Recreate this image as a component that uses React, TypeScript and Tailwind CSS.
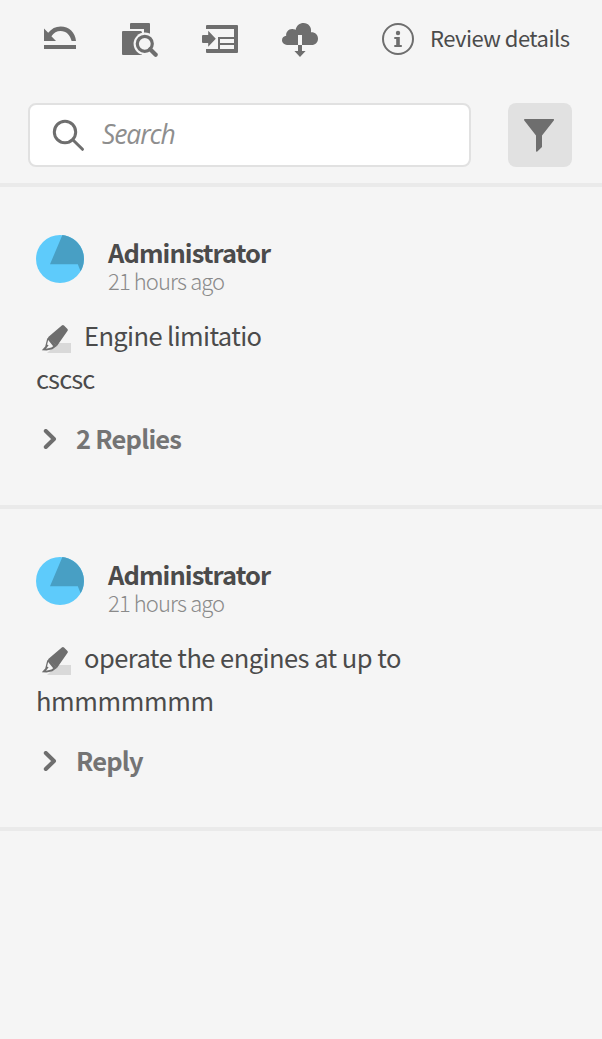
import React from "react";

const ICON = "#6e6e6e";

function UndoIcon() {
  return (
    <svg width="40" height="40" viewBox="40 19 40 40" fill={ICON} aria-hidden="true">
      <path d="M44 28.6L48.2 32.8C51.4 28.6 55.6 26.4 60.6 26.4C69 26.4 75.4 32.4 76 41H71.6C70.2 34.8 66.2 30.9 60.6 30.9C56.8 30.9 53.8 32.4 51.4 36.3L56 41H44Z" />
      <path d="M44 45h32v4H44z" />
    </svg>
  );
}

function FindFileIcon() {
  return (
    <svg width="40" height="40" viewBox="120 19 40 40" fill={ICON} aria-hidden="true">
      <path d="M131 23h18a1 1 0 0 1 1 1v12h-6v-7h-14v-5a1 1 0 0 1 1-1z" />
      <path d="M123 31h17.5a1.5 1.5 0 0 1 1.5 1.5V55h-19a1 1 0 0 1-1-1V32a1 1 0 0 1 1-1z" />
      <circle cx="144.8" cy="43.8" r="11.2" fill="#f5f5f5" />
      <circle cx="144.8" cy="43.8" r="7.5" fill="#f5f5f5" stroke={ICON} strokeWidth="3.2" />
      <path d="M150.2 49.2L155.7 54.7" stroke={ICON} strokeWidth="4.2" strokeLinecap="round" />
    </svg>
  );
}

function ImportIcon() {
  return (
    <svg width="40" height="40" viewBox="200 19 40 40" fill={ICON} aria-hidden="true">
      <path d="M207 25h30a1 1 0 0 1 1 1v26a1 1 0 0 1-1 1h-30a1 1 0 0 1-1-1v-3h12V37h16v-8h-28v-3a1 1 0 0 1 1-1zM220 39v4h14v-4zM220 45v4h14v-4z" fillRule="evenodd" />
      <path d="M203 35h5.2v-4.2l7.6 8-7.6 8V43H203a1 1 0 0 1-1-1v-6a1 1 0 0 1 1-1z" />
    </svg>
  );
}

function CloudIcon() {
  return (
    <svg width="40" height="40" viewBox="280 19 40 40" fill={ICON} aria-hidden="true">
      <path d="M302 45V35h-4v10H288.5C284.8 45 282 43 282 40.2C282 37.5 284.1 36 286.2 35.8C285.7 32.4 288.4 28.8 292.5 29.1C294 29.2 294.6 29.6 295.5 30C296.5 25.6 299.6 23 303.6 23C308.4 23 311.8 27 311 32.2C315 32 318 34.6 318 38.5C318 42.4 315.3 45 311.6 45Z" />
      <path d="M298 45h4v6h3.6l-5.6 6-5.6-6h3.6z" />
    </svg>
  );
}

function InfoIcon() {
  return (
    <svg width="40" height="40" viewBox="378 19 40 40" fill={ICON} aria-hidden="true">
      <circle cx="398" cy="39" r="15" fill="none" stroke={ICON} strokeWidth="2" />
      <circle cx="398" cy="33" r="2.2" />
      <path d="M394.3 37h5.5v8h2v2h-7.5v-2h1.9v-6h-1.9z" />
    </svg>
  );
}

function SearchIcon() {
  return (
    <svg width="40" height="40" viewBox="48 115 40 40" fill="none" stroke={ICON} strokeWidth="3" strokeLinecap="round" aria-hidden="true">
      <circle cx="65" cy="132" r="10.7" />
      <path d="M73 140l9.5 9.3" />
    </svg>
  );
}

function FunnelIcon() {
  return (
    <svg width="40" height="40" viewBox="520 115 40 40" fill={ICON} aria-hidden="true">
      <path d="M524.8 119h28.6c.8 0 .9.9.4 1.5L542 135.4V147l-4.7 4.6c-.6.5-1.3.2-1.3-.6V135.4l-11.7-14.9c-.5-.6-.3-1.5.5-1.5z" />
    </svg>
  );
}

function Avatar() {
  return (
    <svg className="shrink-0" width="48" height="48" viewBox="0 0 48 48" aria-hidden="true">
      <circle cx="24" cy="24" r="24" fill="#5ecbfb" />
      <path d="M26.4 .12A24 24 0 0 1 44.6 36.2L41.8 29.2H14z" fill="#489fc4" />
    </svg>
  );
}

function HighlighterIcon() {
  return (
    <svg className="shrink-0" width="36" height="36" viewBox="38 321 36 36" aria-hidden="true">
      <path d="M57 344h14v10H47z" fill="#d9d9d9" />
      <path d="M49 338.2L47.2 339.4L45.2 347.6L41.8 351.2L46.6 351.6L52.4 350.2L56.8 347z" fill={ICON} />
      <path d="M48.2 341L53.2 347.2L51.4 348.4L46 349.8L48.6 346.2L47 345.4z" fill="#f5f5f5" />
      <path d="M61.8 326.4a1.6 1.6 0 0 1 2.2 0l3.5 3.6a1.5 1.5 0 0 1 .1 1.8L56.8 347.2L48 338.2z" fill={ICON} />
    </svg>
  );
}

function Chevron() {
  return (
    <svg width="20" height="20" viewBox="0 0 20 20" fill="none" stroke={ICON} strokeWidth="4" strokeLinecap="round" strokeLinejoin="round" aria-hidden="true">
      <path d="M5.8 2l8.2 8-8.2 8" />
    </svg>
  );
}

type CommentProps = {
  quote: React.ReactNode;
  body: React.ReactNode;
  replies: React.ReactNode;
};

function Comment({ quote, body, replies }: CommentProps) {
  return (
    <article className="h-[322px] border-b-4 border-[#eaeaea] px-9 pt-12">
      <header className="flex h-[78px] gap-6">
        <Avatar />
        <div className="pt-0.5">
          <div className="text-[25.5px] leading-[30px] font-bold tracking-[-0.92px] text-[#4b4b4b]">Administrator</div>
          <div className="-mt-px text-[22px] leading-7 font-light tracking-[-0.88px] text-[#8a8a8a]">21 hours ago</div>
        </div>
      </header>
      <div className="flex h-[43px] items-center pl-0.5 text-[25.5px] leading-[43px] text-[#4b4b4b]">
        <span className="mt-1.5 mr-2.5 flex"><HighlighterIcon /></span>
        {quote}
      </div>
      <div className="text-[25.5px] leading-[43px] text-[#4b4b4b]">{body}</div>
      <button className="mt-[19px] flex h-10 items-center pl-1 text-[25.5px] leading-10 font-bold text-[#747474]">
        <span className="mt-0.5 mr-4 flex"><Chevron /></span>
        {replies}
      </button>
    </article>
  );
}

export default function App() {
  return (
    <main className="h-[1039px] w-[602px] overflow-hidden bg-[#f5f5f5] font-['Noto_Sans_CJK_SC',sans-serif] whitespace-nowrap">
      <div className="flex h-[103px] items-start pt-[19px] pl-10">
        <div className="flex gap-10">
          <UndoIcon />
          <FindFileIcon />
          <ImportIcon />
          <CloudIcon />
        </div>
        <div className="ml-[58px] flex gap-3">
          <InfoIcon />
          <span className="text-[22px] leading-[37px] tracking-[-0.52px] text-[#4b4b4b]">Review details</span>
        </div>
      </div>
      <div className="flex h-[84px] justify-between border-b-4 border-[#eaeaea] pr-[30px] pl-7">
        <div className="flex h-16 w-[443px] items-center rounded-lg border-2 border-[#e1e1e1] bg-white pl-[18px]">
          <SearchIcon />
          <span className="mb-px ml-3.5 font-['Open_Sans',sans-serif] text-[26.5px] leading-none font-medium tracking-[-1.1px] text-[#8e8e8e] italic">Search</span>
        </div>
        <button className="flex size-16 items-center justify-center rounded-lg bg-[#e1e1e1]">
          <FunnelIcon />
        </button>
      </div>
      <Comment
        quote={<span className="tracking-[-0.62px]">Engine limitatio</span>}
        body={<span className="tracking-[-0.9px]">cscsc</span>}
        replies={<span className="tracking-[-0.8px]">2 Replies</span>}
      />
      <Comment
        quote={<span className="tracking-[-0.54px]">operate the engines at up to</span>}
        body={<span className="tracking-[-0.38px]">hmmmmmmm</span>}
        replies={<span className="tracking-[-0.85px]">Reply</span>}
      />
    </main>
  );
}
